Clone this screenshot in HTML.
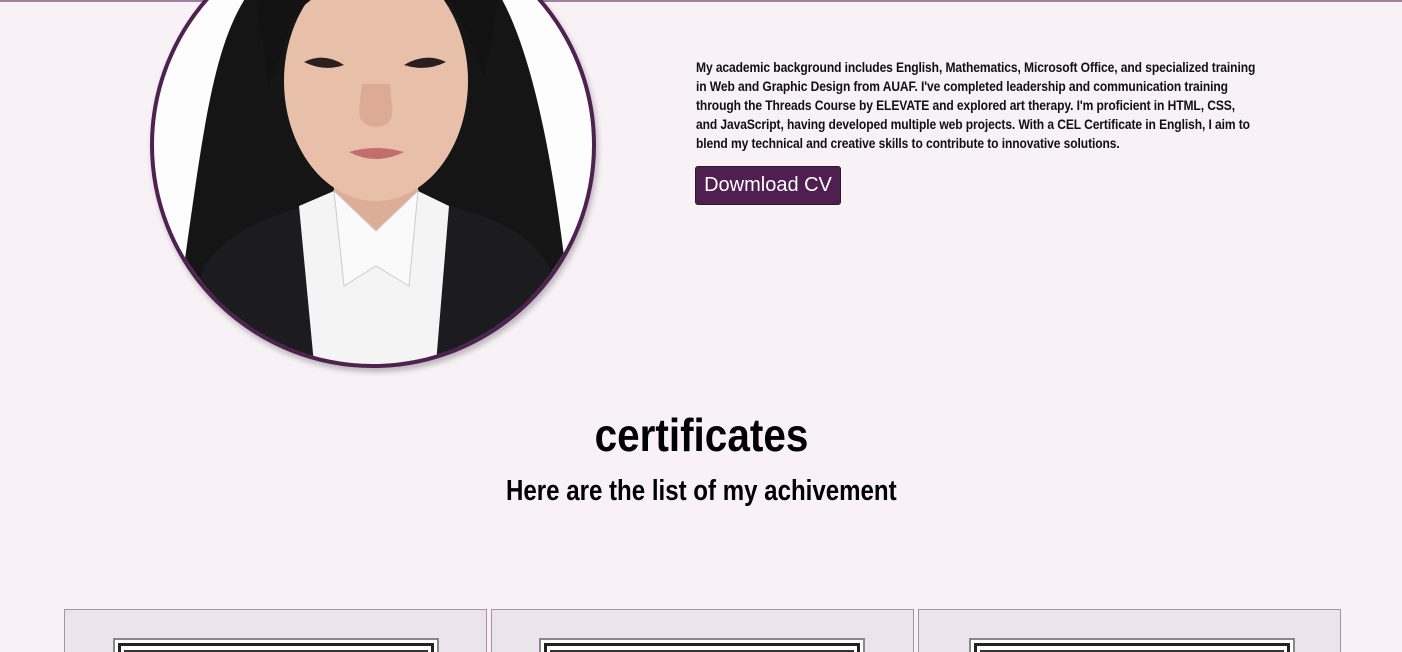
<!DOCTYPE html>
<html style="overflow:hidden"><head><style>
html,body{overflow:hidden}
body{margin:0;width:1402px;height:652px;background:#f8f2f7;font-family:"Liberation Sans",sans-serif;position:relative}
.top{position:absolute;left:0;top:0;width:1402px;height:2px;background:#a07fa0}
.circ{position:absolute;left:150px;top:-78px;width:438px;height:438px;border:4px solid #4e2150;border-radius:50%;overflow:hidden;background:#fdfdfd;box-shadow:2px 4px 6px rgba(0,0,0,.25)}
.txt{position:absolute;left:696px;top:58px;font-size:13.4px;line-height:19px;font-weight:bold;color:#111;white-space:nowrap;transform:scaleX(0.9);transform-origin:0 0;letter-spacing:-0.1px}
.btn{position:absolute;left:695px;top:166px;width:144px;height:37px;background:#4e1f50;border:1px solid #222;border-radius:3px;color:#fff;font-size:20px;line-height:37px;text-align:center}
.h{position:absolute;left:0;width:1402px;text-align:center;font-weight:bold;color:#000}
.h span{display:inline-block}
.card{position:absolute;top:609px;width:421px;height:50px;background:#ece4ec;border:1px solid #a890a8}
.cert{position:absolute;top:28px;width:322px;height:30px;border:2px solid #888;background:#fff;overflow:hidden}
.cert i{position:absolute;left:3px;right:3px;top:3px;height:30px;border:3px solid #222;border-bottom:none}
.cert b{position:absolute;left:9px;right:9px;top:10px;height:30px;border:2px solid #333;border-bottom:none}
</style></head><body>
<div class="top"></div>
<div class="circ">
<svg width="438" height="438" viewBox="0 0 438 438">
<path d="M30 340 C50 200 60 110 100 60 L340 60 C380 120 400 250 410 330 L410 438 L30 438Z" fill="#151515"/>
<rect x="180" y="220" width="84" height="90" fill="#dcae98"/>
<ellipse cx="222" cy="155" rx="92" ry="120" fill="#e8c0aa"/>
<path d="M100 60 C130 10 320 10 345 70 L330 150 C315 110 300 70 270 50 C220 40 170 55 140 90 L115 160Z" fill="#121212"/>
<path d="M150 136 Q170 126 190 139 Q170 146 150 136Z" fill="#2a1e1e"/>
<path d="M250 139 Q272 126 292 136 Q272 146 250 139Z" fill="#2a1e1e"/>
<path d="M208 158 C205 186 200 198 222 201 C244 198 238 186 236 158Z" fill="#dcaa95"/>
<path d="M195 226 Q222 218 250 226 Q222 240 195 226Z" fill="#c26e6c"/>
<path d="M30 438 L50 340 C80 300 120 290 150 280 L222 340 L295 280 C330 290 370 300 395 340 L410 438Z" fill="#1c1c20"/>
<path d="M145 280 L180 265 L222 305 L264 265 L295 280 L282 438 L160 438Z" fill="#f4f4f4"/>
<path d="M180 265 L222 305 L264 265 L255 360 L222 340 L190 360Z" fill="#fafafa" stroke="#ccc"/>
</svg>
</div>
<div class="txt">My academic background includes English, Mathematics, Microsoft Office, and specialized training<br>in Web and Graphic Design from AUAF. I've completed leadership and communication training<br>through the Threads Course by ELEVATE and explored art therapy. I'm proficient in HTML, CSS,<br>and JavaScript, having developed multiple web projects. With a CEL Certificate in English, I aim to<br>blend my technical and creative skills to contribute to innovative solutions.</div>
<div class="btn">Dowmload CV</div>
<div class="h" style="top:408px;font-size:46px"><span style="transform:scaleX(0.88)">certificates</span></div>
<div class="h" style="top:475px;font-size:29px"><span style="transform:scaleX(0.83)">Here are the list of my achivement</span></div>
<div class="card" style="left:64px"><div class="cert" style="left:48px"><i></i><b></b></div></div>
<div class="card" style="left:491px"><div class="cert" style="left:47px"><i></i><b></b></div></div>
<div class="card" style="left:918px"><div class="cert" style="left:50px"><i></i><b></b></div></div>
</body></html>
